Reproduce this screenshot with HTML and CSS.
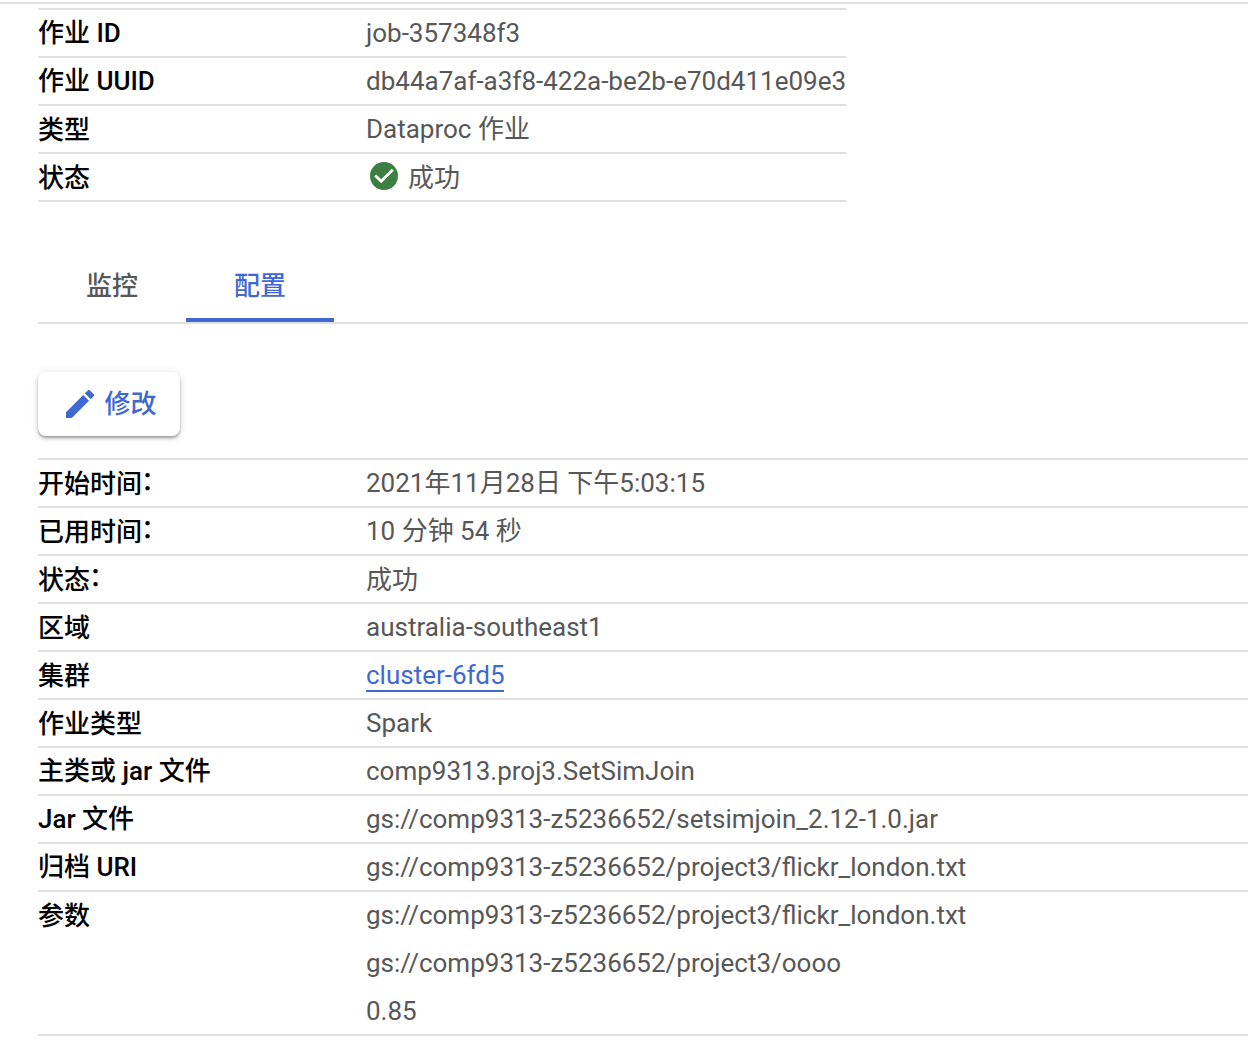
FILE: index.html
```html
<!DOCTYPE html>
<html lang="zh-CN">
<head>
<meta charset="utf-8">
<title>作业详情</title>
<link rel="stylesheet" href="styles.css">
</head>
<body>
<main class="page">
  <dl class="details summary">
    <div class="row"><dt>作业 ID</dt><dd>job-357348f3</dd></div>
    <div class="row"><dt>作业 UUID</dt><dd>db44a7af-a3f8-422a-be2b-e70d411e09e3</dd></div>
    <div class="row"><dt class="han">类型</dt><dd>Dataproc 作业</dd></div>
    <div class="row"><dt class="han">状态</dt><dd class="status">
      <svg class="status-icon" viewBox="0 0 28 28" aria-hidden="true"><circle cx="14" cy="14" r="14" fill="#3c7f40"/><path d="M5.2 13.4l6 5.9L22.8 7.7" fill="none" stroke="#fff" stroke-width="2.8"/></svg>
      <span class="han">成功</span></dd></div>
  </dl>

  <nav class="tabs">
    <a class="tab">监控</a>
    <a class="tab active">配置</a>
  </nav>

  <button class="edit" type="button">
    <svg class="edit-icon" viewBox="3 3 18 18" aria-hidden="true"><path fill="#3f68d0" d="M3 17.25V21h3.75L17.81 9.94l-3.75-3.75L3 17.25zM20.71 7.04a1 1 0 0 0 0-1.41l-2.34-2.34a1 1 0 0 0-1.41 0l-1.83 1.83 3.75 3.75 1.83-1.83z"/></svg>
    <span>修改</span>
  </button>

  <dl class="details">
    <div class="row"><dt class="han">开始时间<span class="colon">：</span></dt><dd>2021年11月28日 下午5:03:15</dd></div>
    <div class="row"><dt class="han">已用时间<span class="colon">：</span></dt><dd>10 分钟 54 秒</dd></div>
    <div class="row"><dt class="han">状态<span class="colon">：</span></dt><dd class="han">成功</dd></div>
    <div class="row"><dt class="han">区域</dt><dd>australia-southeast1</dd></div>
    <div class="row"><dt class="han">集群</dt><dd><a class="link">cluster-6fd5</a></dd></div>
    <div class="row"><dt class="han">作业类型</dt><dd>Spark</dd></div>
    <div class="row"><dt>主类或 jar 文件</dt><dd>comp9313.proj3.SetSimJoin</dd></div>
    <div class="row"><dt>Jar 文件</dt><dd>gs://comp9313-z5236652/setsimjoin_2.12-1.0.jar</dd></div>
    <div class="row"><dt>归档 URI</dt><dd>gs://comp9313-z5236652/project3/flickr_london.txt</dd></div>
    <div class="row"><dt class="han">参数</dt><dd class="args">
      <span>gs://comp9313-z5236652/project3/flickr_london.txt</span>
      <span>gs://comp9313-z5236652/project3/oooo</span>
      <span>0.85</span></dd></div>
  </dl>
</main>
</body>
</html>
```
FILE: styles.css
```css
* {
  box-sizing: border-box;
}

body {
  margin: 0;
  height: 1040px;
  overflow: hidden;
  background: #fff;
  color: #575757;
  font: 400 26px/46px Roboto, "Noto Sans CJK SC", sans-serif;
}

.page {
  display: flex;
  flex-direction: column;
  align-items: stretch;
  margin-top: 2px;
  padding: 4px 0 0 38px;
  border-top: 2px solid #e0e0e0;
}

.details {
  margin: 0;
  border-top: 2px solid #e0e0e0;
}

.summary {
  width: 808px;
}

.row {
  display: grid;
  grid-template-columns: 328px 1fr;
  border-bottom: 2px solid #e0e0e0;
}

dt {
  color: #000;
  font-weight: 500;
  height: 46px;
}

dd {
  margin: 0;
  height: 46px;
  white-space: nowrap;
}

/* Han glyphs sit slightly high on the Latin baseline */
.han {
  padding-top: 1px;
}

.colon {
  position: relative;
  top: -3px;
  left: -1px;
}

.status {
  display: flex;
  gap: 10px;
  padding-left: 4px;
}

.status-icon {
  width: 28px;
  height: 28px;
  margin-top: 8px;
}

.tabs {
  display: flex;
  height: 78px;
  margin-top: 44px;
  border-bottom: 2px solid #e0e0e0;
  font-weight: 500;
}

.tab {
  width: 148px;
  height: 76px;
  padding-top: 4px;
  line-height: 72px;
  text-align: center;
}

.tab.active {
  color: #3f68d0;
  border-bottom: 4px solid #3f68d0;
}

.edit {
  display: flex;
  align-items: center;
  gap: 10.5px;
  width: 142px;
  height: 64px;
  margin: 48px 0 22px;
  padding: 0 0 0 28px;
  border: 0;
  border-radius: 8px;
  background: #fff;
  color: #3f68d0;
  font: inherit;
  font-weight: 500;
  white-space: nowrap;
  box-shadow: 0 2px 2px rgba(0, 0, 0, .22), 0 3px 4px rgba(0, 0, 0, .14), 0 0 8px rgba(0, 0, 0, .1);
}

.edit-icon {
  width: 28px;
  height: 28px;
}

.link {
  display: inline-block;
  width: 138px;
  height: 40px;
  border-bottom: 2px solid #3f68d0;
  color: #3f68d0;
}

.args {
  display: grid;
  grid-auto-rows: 48px;
  height: 142px;
}
```
